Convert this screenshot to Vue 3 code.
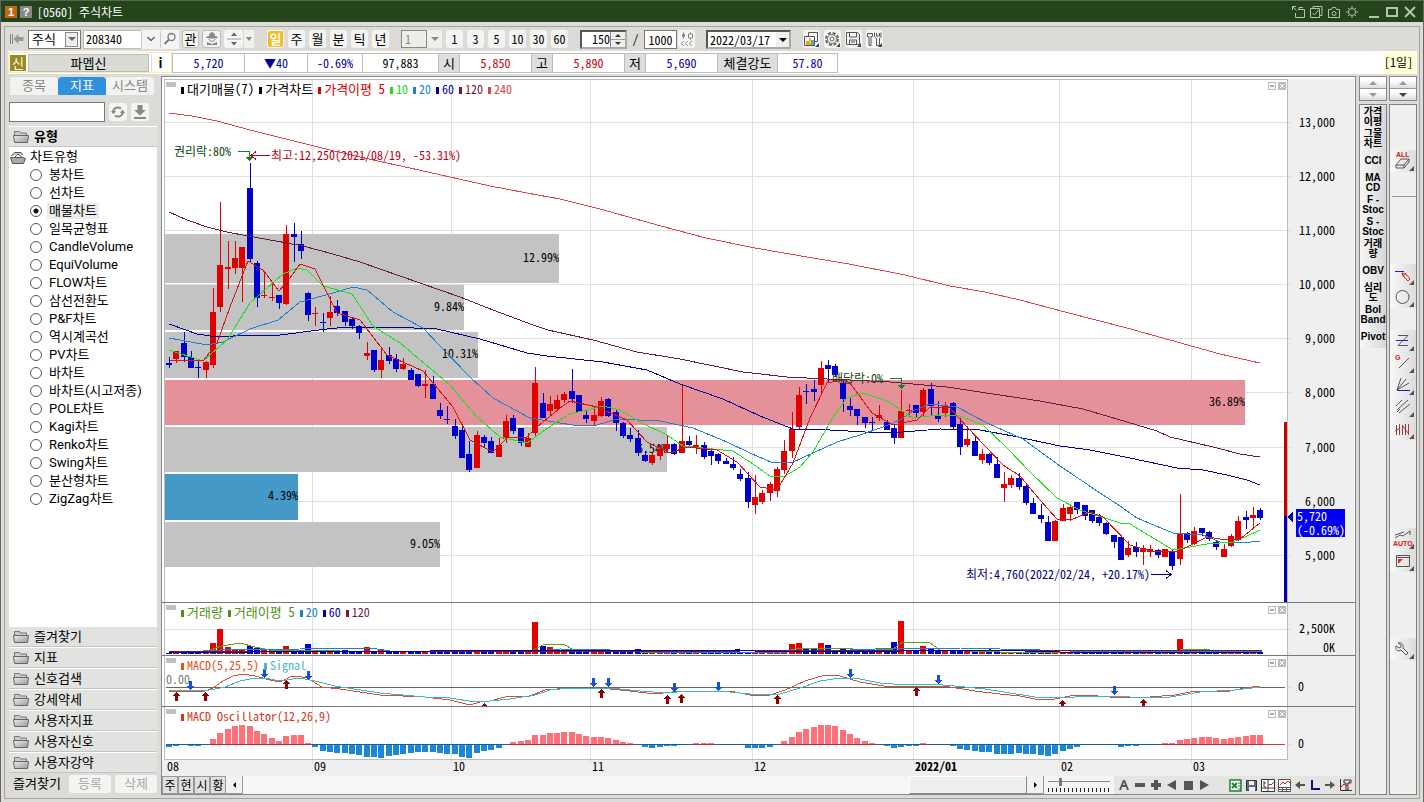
<template>
  <div class="window">
    <header class="titlebar">
      <span class="badge orange">1</span>
      <span class="badge gray">?</span>
      <h1>[0560] 주식차트</h1>
      <div class="win-tools">
        <button v-for="w in winTools" :key="w.label" :aria-label="w.label" :class="w.cls">
          <svg width="14" height="14" viewBox="0 0 14 14"><path :d="w.d" /></svg>
        </button>
      </div>
    </header>

    <div class="frame">
      <div class="toolbar">
        <button class="flat home" aria-label="처음">
          <svg width="16" height="14" viewBox="0 0 16 14"><path d="M1.5 2v10M3.5 2v10" stroke="#888" fill="none" /><path d="M4.500 7l5-5v3h5v4h-5v3z" fill="#999" /></svg>
        </button>
        <div class="combo market">
          <select v-model="market" aria-label="시장"><option>주식</option></select>
          <i class="arrow boxed"></i>
        </div>
        <div class="code">
          <input v-model="code" aria-label="종목코드" />
          <button aria-label="최근 종목"><svg width="10" height="8" viewBox="0 0 10 8"><path d="M1.500 2l3.500 3.500L8.500 2" stroke="#666" stroke-width="1.500" fill="none" /></svg></button>
          <button aria-label="종목 검색"><svg width="14" height="14" viewBox="0 0 14 14"><circle cx="8.500" cy="5" r="3.500" fill="none" stroke="#777" stroke-width="1.300" /><path d="M6 7.500L1.500 12" stroke="#777" stroke-width="1.800" /></svg></button>
        </div>
        <button class="key outlined">관</button>
        <button class="key outlined wide" aria-label="전문가">
          <svg width="14" height="16" viewBox="0 0 14 16"><path d="M4 5c0-5 6-5 6 0l3 1c1 2-13 2-12 0z" fill="#888" /><path d="M4 8c0 3 6 3 6 0" stroke="#888" fill="none" /><path d="M2 11l5 2 5-2v3H2z" fill="#888" /></svg>
        </button>
        <button class="key wide" aria-label="이전 다음">
          <svg width="16" height="16" viewBox="0 0 16 16"><path d="M5 5l3-3.500L11 5zM5 11l3 3.500 3-3.500z" fill="#666" /><path d="M1 8h14" stroke="#999" /></svg>
        </button>
        <button class="flat tiny" aria-label="더보기"><i class="tri"></i></button>

        <div class="group periods">
          <button v-for="p in periods" :key="p" class="key" :class="{ on: p === period }" @click="period = p">{{ p }}</button>
        </div>

        <div class="tick">
          <input value="1" disabled aria-label="분 단위" />
          <button class="flat" aria-label="분 선택"><i class="tri big"></i></button>
        </div>
        <div class="group minutes">
          <button v-for="m in [1, 3, 5, 10, 30, 60]" :key="m" class="key">{{ m }}</button>
        </div>

        <div class="count">
          <input v-model="count" aria-label="표시 개수" />
          <span class="spin"><button aria-label="증가"><i class="up"></i></button><button aria-label="감소"><i class="down"></i></button></span>
        </div>
        <span class="slash">/</span>
        <input v-model="total" class="total" aria-label="전체 개수" />
        <button class="key" aria-label="봉 간격">
          <svg width="16" height="16" viewBox="0 0 16 16"><path d="M4.500 1v7M11.500 1v2m0 4v2M5 10l-3 2.500L5 15M9 10l-3 2.500L9 15M13 10l-3 2.500 3 2.500" fill="none" stroke="#999" /><path d="M3 3h3v3H3z" fill="#888" /><path d="M9.500 3h4v4h-4z" fill="none" stroke="#888" /></svg>
        </button>
        <div class="combo date">
          <select v-model="date" aria-label="기준일"><option>2022/03/17</option></select>
          <i class="arrow solid"></i>
        </div>
        <div class="group icons">
          <button class="key" aria-label="차트 형태">
            <svg width="17" height="17" viewBox="0 0 17 17"><path d="M5.500 5V1.500h9v9H12M1.500 5.500h10v9h-10z" fill="none" stroke="#555" /><path d="M3 10h3v4H3z" fill="#e8a020" /><path d="M6 7h2v7H6z" fill="#e8c020" /><path d="M8 9h3v5H8z" fill="#5ac" /><path d="M16 12v4h-4z" fill="#444" /></svg>
          </button>
          <button class="key" aria-label="환경설정">
            <svg width="17" height="17" viewBox="0 0 17 17"><circle cx="8" cy="8" r="6" fill="none" stroke="#666" stroke-width="2" stroke-dasharray="3 1.700" /><circle cx="8" cy="8" r="4.500" fill="#f4f4f2" stroke="#777" /><circle cx="8" cy="8" r="2" fill="none" stroke="#666" /><path d="M16 12v4h-4z" fill="#444" /></svg>
          </button>
          <button class="key" aria-label="저장">
            <svg width="17" height="17" viewBox="0 0 17 17"><path d="M1.500 1.500h11l2 2v10h-13zM4.500 2v4h7V2M4.500 13V9h7v4M6 11h4" fill="none" stroke="#555" /><path d="M16 12v4h-4z" fill="#444" /></svg>
          </button>
          <button class="key" aria-label="도구">
            <svg width="17" height="17" viewBox="0 0 17 17"><path d="M1.500 4V2.500h5v3h-1.500v9h-2v-9h-1.500zM8.500 1.500v4l2 2v7h3v-7l1.500-2v-4M10.500 2v3h3V2" fill="none" stroke="#555" /><path d="M16 12v4h-4z" fill="#444" /></svg>
          </button>
        </div>
      </div>

      <div class="quote">
        <div class="stock">
          <span class="new">신</span>
          <button class="name">파멥신</button>
          <button class="info">i</button>
        </div>
        <table>
          <tbody>
            <tr>
              <td class="w72 blue">5,720</td>
              <td class="w63 blue">▼40</td>
              <td class="w55 blue">-0.69%</td>
              <td class="w76">97,883</td>
              <th class="w21">시</th>
              <td class="w72 red">5,850</td>
              <th class="w21">고</th>
              <td class="w72 red">5,890</td>
              <th class="w21">저</th>
              <td class="w72 blue">5,690</td>
              <th class="w60">체결강도</th>
              <td class="w60 blue">57.80</td>
            </tr>
          </tbody>
        </table>
        <span class="unit">[1일]</span>
      </div>

      <main class="body">
        <aside class="side">
          <nav class="tabs">
            <button v-for="t in tabs" :key="t" :class="{ on: t === tab }" @click="tab = t">{{ t }}</button>
          </nav>
          <div class="find">
            <input v-model="keyword" aria-label="지표 검색" />
            <button aria-label="새로고침">
              <svg width="14" height="14" viewBox="0 0 14 14"><path d="M2 7a5 5 0 0 1 8-3.500M12 7a5 5 0 0 1-8 3.500" fill="none" stroke="#888" stroke-width="2" /><path d="M0 6h5L2.500 9.500zM9 8h5l-2.500-3.500z" fill="#888" /></svg>
            </button>
            <button aria-label="내려받기">
              <svg width="14" height="14" viewBox="0 0 14 14"><path d="M4.500 0h5v5H13L7 10.500 1 5h3.500zM1 12h12v2H1z" fill="#888" /></svg>
            </button>
          </div>
          <h2 class="cat head"><svg class="folder" viewBox="0 0 16 13"><use href="#folder" /></svg>유형</h2>
          <div class="tree">
            <div class="root"><svg class="folder" viewBox="0 0 16 13"><path d="M1 5l4-3.500h6l2 2.500" fill="#ccc" stroke="#555" /><path d="M3 8L8 3l5 4z" fill="#fff" stroke="#555" /><path d="M.5 6.500h12l3 1-2 5H2.500z" fill="#aaa" stroke="#555" /></svg>차트유형</div>
            <label v-for="c in chartTypes" :key="c"><input v-model="chartType" type="radio" name="chart" :value="c" /><span>{{ c }}</span></label>
          </div>
          <button v-for="c in categories" :key="c" class="cat"><svg class="folder" viewBox="0 0 16 13"><use href="#folder" /></svg>{{ c }}</button>
          <div class="fav">
            <span>즐겨찾기</span>
            <button disabled>등록</button>
            <button disabled>삭제</button>
          </div>
        </aside>

        <section class="chart">
          <div class="pane main">
            <svg viewBox="162 77 1193 525" class="plot">
              <rect x="1287" y="79" width="67" height="523" class="axis-bg" />
              <g class="grid">
                <path v-for="g in prices" :key="g.y" :d="`M165 ${g.y - .5}H1292`" />
                <path v-for="m in months" :key="m.x" :d="`M${m.x - .5} 79V602`" />
              </g>
              <path d="M164.500 602V79.500H1287.500V602" class="edge" />
              <g v-for="b in profile" :key="b.y">
                <rect x="165" :y="b.y" :width="b.to - 165" :height="b.h" :fill="b.color" />
                <text :x="b.to" :y="b.y + b.h / 2 + 3" text-anchor="end">{{ b.text }}</text>
              </g>
              <g v-for="(c, i) in candles" :key="i" :fill="c[4] ? '#e00000' : '#0000cc'">
                <rect :x="cx(i)" :y="c[0]" width="1" :height="c[3] - c[0]" />
                <rect :x="cx(i) - 3" :y="c[1]" width="6" :height="c[2] - c[1]" />
              </g>
              <polyline v-for="m in averages" :key="m.color" :points="m.points" :stroke="m.color" class="line" />
              <g class="note green">
                <text x="174" y="156">권리락:80%</text>
                <path d="M238 151.500h11.500V160" />
                <path d="M246 157h7l-3.500 4z" class="tip" />
                <text x="832" y="383">배당락:0%</text>
                <path d="M890 378.500h11.500V388" />
                <path d="M898 385h7l-3.500 4z" class="tip" />
              </g>
              <g class="note high">
                <text x="271" y="160">최고:12,250(2021/08/19, -53.31%)</text>
                <path d="M270 155.500h-18M256 151.500l-5 4 5 4" />
              </g>
              <g class="note low">
                <text x="1150" y="579" text-anchor="end">최저:4,760(2022/02/24, +20.17%)</text>
                <path d="M1151 574.500h19M1166 570.500l5 4-5 4" />
              </g>
              <rect x="1284" y="422" width="3" height="94" fill="#c80000" />
              <rect x="1284" y="516" width="3" height="86" fill="#0000b0" />
              <text v-for="g in prices" :key="g.text" x="1335" :y="g.y + 4" text-anchor="end">{{ g.text }}</text>
              <path d="M1287 517l6-6v12z" fill="#0000a0" />
              <rect x="1296" y="509" width="49" height="28" fill="#0000f0" />
              <g class="tag"><text x="1297" y="521">5,720</text><text x="1297" y="535">(-0.69%)</text></g>
            </svg>
            <div class="legend">
              <i class="fold"></i>
              <span v-for="l in legends.price" :key="l[0]" :class="{ ko: l[2] }" :style="{ color: l[1] }">{{ l[0] }}</span>
            </div>
            <div class="pane-tools"><button class="max" aria-label="최대화"></button><button class="close" aria-label="닫기"><svg viewBox="0 0 6 6"><path d="M1 1l4 4M5 1L1 5" /></svg></button></div>
          </div>

          <div class="pane">
            <svg viewBox="162 603 1193 52" class="plot">
              <rect x="1287" y="603" width="67" height="52" class="axis-bg" />
              <g class="grid">
                <path d="M165 629.500H1292M1287 653.500H1292" />
                <path v-for="m in months" :key="m.x" :d="`M${m.x - .5} 603V655`" />
              </g>
              <path d="M164.500 603V655M1287.500 603V655" class="edge" />
              <rect v-for="(v, i) in volumes" :key="i" :x="cx(i) - 3" :y="654 - v" width="6" :height="v" :fill="candles[i][4] ? '#e80000' : '#0000cc'" />
              <polyline v-for="m in volumeAverages" :key="m.color" :points="m.points" :stroke="m.color" class="line" />
              <text x="1335" y="633" text-anchor="end">2,500K</text>
              <text x="1335" y="652" text-anchor="end">0K</text>
            </svg>
            <div class="legend">
              <i class="fold"></i>
              <span v-for="l in legends.volume" :key="l[0]" :class="{ ko: l[2] }" :style="{ color: l[1] }">{{ l[0] }}</span>
            </div>
            <div class="pane-tools"><button class="max" aria-label="최대화"></button><button class="close" aria-label="닫기"><svg viewBox="0 0 6 6"><path d="M1 1l4 4M5 1L1 5" /></svg></button></div>
          </div>

          <div class="pane">
            <svg viewBox="162 656 1193 50" class="plot">
              <rect x="1287" y="656" width="67" height="50" class="axis-bg" />
              <g class="grid">
                <path d="M1287 687.500H1292" />
                <path v-for="m in months" :key="m.x" :d="`M${m.x - .5} 656V706`" />
              </g>
              <path d="M164.500 656V706M1287.500 656V706" class="edge" />
              <path d="M166 687.500H1285" stroke="#666" />
              <text x="166" y="684" class="dim">0.00</text>
              <polyline :points="macd" stroke="#d8502c" class="line" />
              <polyline :points="signal" stroke="#3cb8c0" class="line" />
              <path v-for="a in sells" :key="a[0]" :d="`M${a[0] - 1} ${a[1]}h3v5h2l-3.500 4-3.500-4h2z`" fill="#1450e0" />
              <path v-for="a in buys" :key="a[0]" :d="`M${a[0] - 1} ${a[1] + 9}h3v-5h2l-3.500-4-3.500 4h2z`" fill="#8c0000" />
              <text x="1298" y="691">0</text>
            </svg>
            <div class="legend">
              <i class="fold"></i>
              <span v-for="l in legends.macd" :key="l[0]" :style="{ color: l[1] }">{{ l[0] }}</span>
            </div>
            <div class="pane-tools"><button class="max" aria-label="최대화"></button><button class="close" aria-label="닫기"><svg viewBox="0 0 6 6"><path d="M1 1l4 4M5 1L1 5" /></svg></button></div>
          </div>

          <div class="pane">
            <svg viewBox="162 707 1193 69" class="plot">
              <rect x="1287" y="707" width="67" height="69" class="axis-bg" />
              <rect x="162" y="760" width="1192" height="16" class="axis-bg" />
              <g class="grid">
                <path d="M1287 744.500H1292" />
                <path v-for="m in months" :key="m.x" :d="`M${m.x - .5} 707V764`" />
              </g>
              <path d="M164.500 707V759.500H1287.500V707" class="edge" />
              <rect v-for="(v, i) in oscillator" :key="i" :x="cx(i) - 3" :y="v > 0 ? 744 - v : 744" width="6" :height="Math.abs(v)" :fill="v > 0 ? '#ff7078' : '#1c86d8'" />
              <path v-for="(v, i) in oscillator" :key="'z' + i" :d="`M${cx(i) - 3} 744.500h8`" :stroke="v > 0 ? '#b83040' : '#1060a0'" />
              <path d="M1262 744.500H1285" stroke="#c84028" />
              <text x="1298" y="748">0</text>
              <text v-for="m in months" :key="m.text" :x="m.x + 1" y="771" :class="{ bold: m.year }">{{ m.text }}</text>
              <text x="167" y="771">08</text>
            </svg>
            <div class="legend">
              <i class="fold"></i>
              <span v-for="l in legends.osc" :key="l[0]" :style="{ color: l[1] }">{{ l[0] }}</span>
            </div>
            <div class="pane-tools"><button class="max" aria-label="최대화"></button><button class="close" aria-label="닫기"><svg viewBox="0 0 6 6"><path d="M1 1l4 4M5 1L1 5" /></svg></button></div>
          </div>

          <div class="bottom">
            <button v-for="b in ['주', '현', '시', '황']" :key="b" class="mini">{{ b }}</button>
            <button class="step" aria-label="왼쪽"><i class="left"></i></button>
            <div class="track"><div class="thumb"></div></div>
            <button class="step" aria-label="오른쪽"><i class="right"></i></button>
            <div class="zoom">
              <input v-model="zoom" type="range" min="0" max="100" aria-label="확대" />
              <i class="ticks"></i>
            </div>
            <div class="controls">
              <button v-for="c in controls" :key="c.label" :aria-label="c.label"><svg width="12" height="12" viewBox="0 0 12 12"><path :d="c.d" fill="#555" /></svg></button>
            </div>
            <div class="controls last">
              <button aria-label="엑셀"><svg width="13" height="13" viewBox="0 0 13 13"><path d="M1 1h11v11H1z" fill="#fff" stroke="#208030" stroke-width="1.500" /><path d="M3 4l5 5M8 4L3 9" stroke="#208030" stroke-width="2" /><path d="M9 4h3M9 7h3M9 10h3" stroke="#208030" /></svg></button>
              <button aria-label="저장"><svg width="13" height="13" viewBox="0 0 13 13"><path d="M1.500 1.500h10v10h-10z" fill="#5a6a88" stroke="#333" /><path d="M4 2h5v4H4zM4 8h6v4H4z" fill="#eee" /></svg></button>
              <button aria-label="분할"><svg width="14" height="13" viewBox="0 0 14 13"><path d="M.5.500h13v12H.5z" fill="#fff" stroke="#333" /><path d="M2 3h2v2H2m0 2h2v3M7 1v11M1 9h12" stroke="#444" fill="none" /><path d="M7 7l2-2 1 1 3-3" stroke="#c02020" fill="none" /></svg></button>
              <button aria-label="통합"><svg width="13" height="13" viewBox="0 0 13 13"><path d="M.5.500h12v12H.5z" fill="#fff" stroke="#555" /><path d="M1 8.500h11M1 10.500h11M4.500 8v4M8.500 8v4" stroke="#555" /><path d="M2 6l3-3 2 2 3-3 2 2" stroke="#c02020" fill="none" /></svg></button>
              <button aria-label="이전"><svg width="12" height="12" viewBox="0 0 12 12"><path d="M1 6l5-4v3h5v2H6v3z" fill="#555" /></svg></button>
              <button aria-label="로그"><svg width="12" height="12" viewBox="0 0 12 12"><path d="M3 1v9h8" stroke="#101080" stroke-width="2" fill="none" /></svg></button>
              <button aria-label="다음"><svg width="12" height="12" viewBox="0 0 12 12"><path d="M11 6L6 2v3H1v2h5v3z" fill="#555" /></svg></button>
              <button aria-label="도구"><svg width="14" height="14" viewBox="0 0 14 14"><path d="M1.500 1v11.500H13M5 2h7v3H9v7H7V5H5z" stroke="#333" fill="none" /><path d="M1 10l4-4 2 2 4-5" stroke="#c02020" fill="none" /></svg></button>
            </div>
          </div>
        </section>

        <aside class="rail">
          <div class="updown"><button aria-label="위로"><i class="up"></i></button><button aria-label="아래로"><i class="down"></i></button></div>
          <div class="shelf">
            <button v-for="s in shortcuts" :key="s" class="short">{{ s }}</button>
          </div>
        </aside>
        <aside class="rail">
          <div class="updown dark"><button aria-label="위로"><i class="up"></i></button><button aria-label="아래로"><i class="down"></i></button></div>
          <div class="shelf tools">
            <button v-for="t in tools" :key="t.label" class="tool" :class="t.cls" :aria-label="t.label">
              <svg width="26" height="22" viewBox="0 0 26 22">
                <path v-if="t.gray" :d="t.gray" stroke="#555" fill="none" />
                <path v-if="t.red" :d="t.red" stroke="#c83020" fill="none" />
                <path v-if="t.blue" :d="t.blue" stroke="#2020c0" fill="none" />
                <path v-if="t.fill" :d="t.fill" fill="#d83020" />
                <text v-if="t.text" :x="t.tx" :y="t.ty">{{ t.text }}</text>
                <path d="M24 16v5h-5z" fill="#555" />
              </svg>
            </button>
          </div>
        </aside>
      </main>
    </div>

    <svg width="0" height="0" class="defs">
      <defs>
        <linearGradient id="fg" x1="0" y1="0" x2="1" y2="1"><stop offset="0" stop-color="#eee" /><stop offset="1" stop-color="#999" /></linearGradient>
        <symbol id="folder" viewBox="0 0 16 13"><path d="M1.500 5V1.500h5l1 1.500h6v2" fill="#ccc" stroke="#777" /><path d="M.5 5.500h15l-1 7h-13z" fill="url(#fg)" stroke="#666" /></symbol>
      </defs>
    </svg>
  </div>
</template>

<script setup>
import { ref } from 'vue'

const market = ref('주식')
const code = ref('208340')
const period = ref('일')
const count = ref('150')
const total = ref('1000')
const date = ref('2022/03/17')
const keyword = ref('')
const tab = ref('지표')
const chartType = ref('매물차트')
const zoom = ref(18)

const periods = ['일', '주', '월', '분', '틱', '년']
const tabs = ['종목', '지표', '시스템']
const categories = ['즐겨찾기', '지표', '신호검색', '강세약세', '사용자지표', '사용자신호', '사용자강약']
const chartTypes = ['봉차트', '선차트', '매물차트', '일목균형표', 'CandleVolume', 'EquiVolume', 'FLOW차트', '삼선전환도', 'P&F차트', '역시계곡선', 'PV차트', '바차트', '바차트(시고저종)', 'POLE차트', 'Kagi차트', 'Renko차트', 'Swing차트', '분산형차트', 'ZigZag차트']
const shortcuts = ['가격\n이평', '그물\n차트', 'CCI', 'MA\nCD', 'F -\nStoc', 'S -\nStoc', '거래\n량', 'OBV', '심리\n도', 'Bol\nBand', 'Pivot']

const winTools = [
  { label: '창 분리', d: 'M1.500 5V1.500H5M1.500 1.500l4 4M7 4.500h6.500v8h-9V8M8 4V2.500h4' },
  { label: '창 복사', d: 'M4 3.500V1.500h9v9h-2M1.500 3.500h9v9h-9zM3.500 8l2 2 4-5' },
  { label: '화면 캡처', d: 'M1.500 4.500h3l1-2h3l1 2h3v8h-11zM9 8.500a2 2 0 1 1-4 0 2 2 0 0 1 4 0' },
  { label: '설정', d: 'M10.500 7a3.500 3.500 0 1 1-7 0 3.500 3.500 0 0 1 7 0M7 1v2M7 11v2M1 7h2M11 7h2M3 3l1 1M10 10l1 1M3 11l1-1M10 4l1-1' },
  { label: '최소화', d: 'M2 12h10', cls: 'bold gap' },
  { label: '최대화', d: 'M2 3h10v8H2z', cls: 'bold' },
  { label: '닫기', d: 'M2 2l10 10M12 2L2 12', cls: 'bold' }
]

const controls = [
  { label: '자동', d: 'M1 11L5 1h2l4 10H9L8 8H4l-1 3zM5 6h2L6 3z' },
  { label: '축소', d: 'M1 4h10v4H1z' },
  { label: '확대', d: 'M4 1h4v3h3v4H8v3H4V8H1V4h3z' },
  { label: '뒤로', d: 'M10 1v10L1 6z' },
  { label: '정지', d: 'M2 2h9v9H2z' },
  { label: '재생', d: 'M2 1v10l9-5z' }
]

const tools = [
  { label: '전체 지우기', cls: 'eraser', gray: 'M6 15l5-6h8l-5 6zM6 15v3h8v-3M14 18l5-6V9', text: 'ALL', tx: 6, ty: 7 },
  { label: '추세선', cls: 'first', blue: 'M5 7.500h9', red: 'M12 9l2 4 4 4 2-2-4-5zM12 9l1 3 3-2' },
  { label: '도형', gray: 'M19 11a6.500 6.500 0 1 1-13 0 6.500 6.500 0 0 1 13 0' },
  { label: '수평선', cls: 'second', gray: 'M8 5.500h10L8 15.500h10', blue: 'M6 10.500h12' },
  { label: '각도선', gray: 'M9 16L19 6', text: 'G', tx: 5, ty: 8 },
  { label: '부채꼴', gray: 'M7 16L11 4M7 16L16 5M7 16L19 9', blue: 'M7 16.500h13' },
  { label: '평행선', gray: 'M6 10l6-6M7 14L18 4M9 17L20 8M7 16l3-3' },
  { label: '주기선', red: 'M9.500 6v11M12.500 7v10M18.500 6v11M5 13l5-3M12 7l6 8', gray: 'M6.500 7v10M15.500 6v11' },
  { label: '자동 추세', cls: 'third', gray: 'M5 10l5-3 3 1 7-5v4M5 7l9-3', text: 'AUTO', tx: 3, ty: 18 },
  { label: '화면 설정', gray: 'M6.500 5.500h13v11h-13zM6 7.500h13', fill: 'M8 9h5l-5 5z' },
  { label: '도구', cls: 'fourth', gray: 'M8 5l3 2v2l-2 1-3-2c-1 4 2 6 5 4l5 5 2-2-5-5c1-4-2-6-5-5z' }
]

const legends = {
  price: [['대기매물(7)', '#000', true], ['가격차트', '#000', true], ['가격이평 5', '#d80000', true], ['10', '#20d820'], ['20', '#2080d0'], ['60', '#0000a0'], ['120', '#701840'], ['240', '#e04048']],
  volume: [['거래량', '#509010', true], ['거래이평 5', '#509010', true], ['20', '#2080d0'], ['60', '#0000a0'], ['120', '#701840']],
  macd: [['MACD(5,25,5)', '#e05020'], ['Signal', '#48b8c0']],
  osc: [['MACD Oscillator(12,26,9)', '#d03818']]
}

const prices = [
  { text: '13,000', y: 123 }, { text: '12,000', y: 177 }, { text: '11,000', y: 231 },
  { text: '10,000', y: 285 }, { text: '9,000', y: 339 }, { text: '8,000', y: 393 },
  { text: '7,000', y: 448 }, { text: '6,000', y: 502 }, { text: '5,000', y: 556 }
]

const months = [
  { text: '09', x: 313 }, { text: '10', x: 452 }, { text: '11', x: 591 }, { text: '12', x: 753 },
  { text: '2022/01', x: 914, year: true }, { text: '02', x: 1060 }, { text: '03', x: 1192 }
]

const profile = [
  { y: 234, h: 49, to: 559, text: '12.99%', color: '#c3c3c3' },
  { y: 285, h: 45, to: 464, text: '9.84%', color: '#c3c3c3' },
  { y: 332, h: 46, to: 478, text: '10.31%', color: '#c3c3c3' },
  { y: 380, h: 45, to: 1245, text: '36.89%', color: '#e5919a' },
  { y: 427, h: 45, to: 667, text: '6.54%', color: '#c3c3c3' },
  { y: 474, h: 46, to: 298, text: '4.39%', color: '#4599c6' },
  { y: 522, h: 45, to: 440, text: '9.05%', color: '#c3c3c3' }
]

const cx = i => Math.round(169 + i * 7.324)

// high, body top, body bottom, low, rising
const candles = [
  [357,363,365,368,0],[351,351,359,363,1],[332,343,357,362,0],[351,357,368,368,0],[361,367,368,378,0],
  [361,362,370,378,1],[288,312,365,368,1],[202,265,307,312,1],[241,267,269,289,1],[241,258,268,274,1],
  [247,247,268,302,1],[163,188,259,262,0],[261,263,298,307,0],[271,295,296,298,1],[282,297,298,301,1],
  [295,295,303,309,0],[225,234,304,305,1],[223,234,237,262,0],[231,244,251,259,0],[292,293,315,321,0],
  [307,313,314,326,1],[313,322,323,332,0],[296,312,318,326,1],[300,306,313,316,0],[311,311,322,326,0],
  [318,319,326,329,0],[325,326,333,339,0],[342,353,356,360,1],[350,350,370,372,0],[349,360,370,378,1],
  [347,355,361,364,0],[354,359,369,372,0],[358,364,369,370,1],[368,370,380,380,0],[374,374,386,387,0],
  [370,384,386,398,1],[376,384,399,399,0],[403,410,416,419,0],[406,419,420,424,0],[419,426,436,439,0],
  [425,430,458,458,0],[441,454,470,472,0],[431,435,468,468,1],[435,437,443,447,0],[437,441,453,453,0],
  [438,445,457,457,1],[415,421,439,443,1],[415,418,431,434,0],[428,428,443,446,0],[433,438,447,447,1],
  [367,383,433,437,1],[393,403,418,418,0],[396,404,411,415,1],[395,400,409,411,1],[392,394,400,403,1],
  [369,391,399,403,0],[395,395,412,412,0],[410,415,419,423,0],[406,415,421,425,1],[397,401,416,417,1],
  [398,399,416,417,0],[410,412,423,431,0],[422,423,436,438,0],[428,435,439,442,0],[430,438,453,456,0],
  [451,455,461,462,0],[453,455,463,465,1],[445,449,456,460,1],[436,444,449,453,1],[443,444,454,455,0],
  [384,441,453,453,1],[436,441,445,448,0],[435,445,447,454,1],[442,445,457,459,0],[448,451,456,465,0],
  [453,454,461,464,0],[458,461,464,464,0],[457,464,468,470,0],[469,474,479,481,0],[472,478,502,508,0],
  [475,497,505,514,1],[490,493,502,504,1],[482,484,493,501,1],[467,469,491,497,1],[440,451,470,474,1],
  [412,429,451,458,1],[387,395,427,430,1],[384,391,392,404,0],[380,389,392,401,0],[361,368,385,393,1],
  [360,365,369,383,0],[364,366,375,377,0],[381,383,399,412,0],[398,406,410,416,0],[409,409,416,425,0],
  [417,417,423,428,0],[417,422,423,431,0],[405,415,418,421,1],[420,422,430,430,0],[425,428,438,444,0],
  [390,411,438,438,1],[404,410,411,417,1],[405,405,413,418,0],[388,390,412,416,1],[383,389,406,415,0],
  [401,415,419,422,0],[402,406,413,417,1],[402,403,427,430,0],[418,424,447,455,0],[426,439,445,447,1],
  [436,441,456,456,0],[449,454,460,464,1],[453,454,463,465,0],[457,464,478,478,0],[472,484,488,502,1],
  [475,478,485,488,1],[473,478,487,490,0],[485,486,503,505,0],[498,503,514,514,0],[504,515,519,523,0],
  [516,522,541,541,0],[520,521,541,541,1],[504,508,521,521,1],[504,507,514,521,1],[502,502,510,514,0],
  [505,505,516,520,0],[510,510,521,523,0],[514,517,523,526,0],[522,523,534,535,0],[535,535,542,548,0],
  [537,537,560,560,0],[541,548,555,557,1],[542,547,552,557,0],[545,548,552,565,1],[545,549,552,557,1],
  [549,550,555,558,0],[549,549,557,557,1],[550,552,566,570,0],[494,533,559,565,1],[532,533,540,543,0],
  [527,531,544,545,1],[528,528,533,536,0],[531,532,539,541,0],[541,542,547,550,0],[544,549,557,557,1],
  [534,536,546,547,1],[516,521,540,541,1],[511,517,520,529,0],[507,515,518,528,1],[508,510,518,520,0]
]

const averages = [
  { color: '#e04450', points: '169,113 192,116 217,121 250,130 290,140 330,150 373,160 410,168 450,177 490,186 527,193 560,199 600,209 661,226 706,238 755,248 813,258 849,264 905,275 950,286 985,292 1020,300 1065,312 1127,328 1170,340 1220,354 1260,363' },
  { color: '#701840', points: '169,212 187,220 207,227 227,232 248,236 287,243 303,246 333,254 360,262 420,283 460,297 493,310 533,325 548,330 593,340 637,352 680,359 743,372 787,377 827,379 850,380 890,382 947,387 993,394 1040,401 1083,409 1127,422 1157,431 1170,437 1213,447 1240,454 1260,457' },
  { color: '#000098', points: '169,324 197,334 217,337 250,335 280,335 327,329 347,327 390,327 437,329 480,339 527,353 547,356 603,362 647,370 680,384 723,399 760,416 793,429 830,430 883,433 903,432 940,429 980,430 1013,436 1060,446 1090,450 1130,458 1177,468 1203,470 1227,475 1247,480 1260,485' },
  { color: '#2080d0', points: '169,338 207,345 223,342 250,329 278,320 300,302 333,293 353,287 367,290 393,312 423,328 440,346 470,377 493,398 530,418 560,423 573,425 597,425 617,419 660,421 693,428 727,442 750,453 773,463 793,462 813,453 837,442 860,435 883,427 900,420 913,411 930,404 957,407 987,423 1023,439 1060,466 1100,493 1120,506 1137,518 1173,533 1203,535 1220,542 1243,543 1260,541' },
  { color: '#20e020', points: '169,350 203,361 227,340 250,303 283,274 297,268 307,270 323,286 352,294 373,326 400,343 450,385 477,417 500,437 527,443 545,430 560,420 570,414 603,406 620,410 640,422 667,435 683,446 733,451 750,462 770,476 785,476 800,467 813,452 833,417 847,398 863,393 887,401 913,418 930,416 957,415 983,425 1007,448 1030,472 1057,498 1080,510 1120,523 1130,524 1173,550 1207,544 1233,542 1247,536 1260,530' },
  { color: '#e01010', points: '169,360 203,361 217,343 230,307 248,261 263,270 279,291 290,278 300,264 315,269 337,313 360,320 387,355 423,371 453,407 470,440 493,452 507,438 527,437 537,427 560,408 570,401 597,407 627,420 647,442 670,453 687,447 717,450 737,462 760,487 777,490 793,463 810,418 827,383 843,380 850,383 872,413 893,425 917,420 930,407 950,408 967,427 1003,465 1020,476 1040,500 1057,519 1073,519 1090,512 1103,517 1130,545 1150,551 1177,552 1207,537 1227,540 1240,539 1260,523' }
]

// the tall volume bars, everything else trades thin
const tall = {
  1: 2, 2: 3, 6: 11, 7: 25, 8: 7, 9: 5, 10: 5, 11: 8, 12: 6, 16: 8, 19: 10, 27: 7, 29: 5,
  50: 32, 51: 8, 52: 7, 53: 5, 64: 5, 84: 4, 85: 10, 86: 11, 87: 6, 88: 5, 89: 11, 90: 9, 92: 6,
  97: 6, 99: 12, 100: 33, 103: 8, 104: 6, 134: 4, 137: 4, 138: 15
}
const volumes = candles.map((c, i) => {
  if (tall[i]) return tall[i]
  if (i < 6) return 1
  if (i < 25 || (i > 90 && i < 114)) return 4
  return i < 64 ? 3 : 2
})

const volumeAverages = [
  { color: '#60a010', points: '169,653 205,652 222,646 240,643 255,647 270,650 300,650 340,651 500,652 533,650 545,644 565,645 572,649 640,652 780,652 800,648 850,648 860,651 893,649 903,642 930,643 940,650 1000,652 1170,652 1185,649 1210,650 1235,653 1262,652' },
  { color: '#2080d0', points: '169,653 220,650 300,649 370,648 390,651 540,651 560,649 610,650 680,653 790,652 850,650 900,648 960,648 1040,650 1070,651 1180,651 1262,651' },
  { color: '#701840', points: '169,652 260,651 500,651 740,651 930,650 1262,650' },
  { color: '#0000a0', points: '169,653 250,652 430,651 740,650 770,652 900,651 990,650 1060,652 1262,652' }
]

const macd = '169,691 205,691 213,688 223,681 233,676 243,674 255,676 270,680 280,682 290,677 297,676 307,678 322,687 340,689 380,695 425,697 450,700 470,705 480,702 490,701 505,697 530,696 545,690 570,688 600,688 630,691 655,694 680,691 710,691 735,692 750,695 770,695 785,690 805,681 825,675 840,676 860,682 890,687 920,686 950,687 975,691 1000,694 1020,696 1040,700 1055,699 1070,696 1085,695 1110,697 1150,697 1175,695 1195,691 1230,691 1245,688 1260,686'
const signal = '169,691 210,690 225,687 240,681 255,678 265,678 280,681 300,678 315,681 335,686 380,693 425,697 450,698 475,702 490,701 510,699 535,695 550,690 570,688 610,688 640,691 665,693 690,691 720,691 750,694 780,694 800,688 820,681 840,678 860,679 880,683 905,685 930,684 955,686 985,689 1010,693 1035,697 1055,698 1075,697 1100,696 1130,697 1170,697 1200,692 1235,690 1260,687'
const sells = [[190, 681], [264, 669], [308, 671], [593, 678], [608, 678], [674, 683], [718, 682], [850, 669], [938, 675], [1114, 686]]
const buys = [[176, 692], [205, 692], [286, 680], [484, 703], [601, 689], [667, 695], [681, 694], [777, 695], [916, 687], [1062, 700], [1143, 699]]

const oscillator = [
  -3, -2, -1, -2, -2, -1, 5, 11, 15, 18, 19, 18, 13, 10, 6, 3, 8, 9, 9, 1, -3, -7, -8, -9, -9,
  -10, -11, -13, -13, -14, -12, -11, -10, -9, -8, -8, -8, -9, -10, -10, -13, -14, -9, -7, -6, -4, 0, 2, 3, 4,
  9, 9, 11, 11, 12, 12, 10, 8, 7, 7, 6, 4, 2, 1, -1, -3, -4, -3, -2, -2, 0, 0, 1, 1, 1,
  0, 0, 0, -1, -4, -4, -4, -3, 0, 3, 7, 12, 15, 17, 19, 19, 18, 14, 10, 6, 3, 1, 0, -2, -4,
  -3, -2, -2, 1, 0, -1, 0, -2, -5, -6, -7, -8, -8, -10, -10, -10, -9, -10, -10, -11, -12, -10, -7, -5, -3,
  -1, -1, 0, -1, -1, -3, -2, -2, -1, 0, 0, 1, 1, 4, 5, 6, 7, 7, 6, 5, 6, 7, 8, 9, 9
]
</script>

<style>
body { background: #dcdbd7; }
</style>

<style scoped>
* { box-sizing: border-box; }
.window {
  min-height: 100vh;
  display: flex;
  flex-direction: column;
  background: #dcdbd7;
  border: 1px solid #666;
  border-top: 0;
  color: #000;
  font: 12px/16px "Noto Sans Mono CJK KR", "Noto Sans CJK KR", sans-serif;
}
button, input, select {
  font: inherit;
  color: inherit;
  margin: 0;
  padding: 0;
  border: 0;
  background: none;
  border-radius: 0;
  min-width: 0;
}
button {
  display: flex;
  align-items: center;
  justify-content: center;
  white-space: nowrap;
}
h1, h2 { margin: 0; font: inherit; }
.defs { position: absolute; }

.titlebar {
  height: 22px;
  display: flex;
  align-items: center;
  gap: 3px;
  padding: 0 6px 0 4px;
  background: #24441c;
  border-top: 1px solid #52694c;
  color: #fff;
}
.titlebar h1 { margin-left: 2px; }
.badge { width: 12px; height: 12px; font: bold 11px/12px "Liberation Sans", sans-serif; text-align: center; }
.badge.orange { background: #c06810; }
.badge.gray { background: #888; }
.win-tools { margin-left: auto; display: flex; gap: 4px; }
.win-tools path { fill: none; stroke: #b4c4ae; }
.win-tools .bold path { stroke-width: 2; }
.win-tools .gap { margin-left: 4px; }

.frame {
  flex: 1;
  display: flex;
  flex-direction: column;
  margin: 4px 3px 3px;
  padding: 0 2px 3px 3px;
  border: 1px solid #a4a49e;
}
.toolbar { height: 24px; display: flex; align-items: center; }
.key { height: 18px; width: 17px; background: #f4f4f2; border-radius: 3px; }
.key.outlined { border: 1px solid #bbb; margin-left: 3px; font-size: 13px; }
.key.wide { width: 19px; margin-left: 3px; }
.key.on { background: #f8b820; color: #fff; font-weight: bold; border: 1px solid #fff; }
.home { width: 17px; margin-right: 3px; }
.tiny { width: 10px; height: 18px; background: #f0f0ee; margin-left: 1px; }
.tri { border: 3px solid transparent; border-top: 4px solid #888; border-bottom: 0; }
.tri.big { border-width: 4px 4px 0; }
.combo { display: grid; align-items: center; background: #fff; border: 1px solid #777; height: 19px; }
.combo select { grid-area: 1 / 1; appearance: none; width: 100%; padding-left: 3px; outline: 0; }
.market { width: 53px; font-size: 13px; }
.date { width: 85px; margin: 0 12px 0 11px; border: 2px inset #aaa; }
.date select { padding-left: 2px; }
.arrow { grid-area: 1 / 1; justify-self: end; width: 13px; height: 15px; display: grid; place-items: center; pointer-events: none; background: #eee; }
.arrow::after { content: ""; border: 4px solid transparent; border-top-color: #666; border-bottom: 0; }
.arrow.boxed { border: 1px solid #888; margin-right: 2px; }
.arrow.solid::after { border-top-color: #000; }
.code { display: flex; height: 19px; margin-left: 2px; background: #fff; }
.code input { width: 58px; padding-left: 2px; border: 1px solid #bbb; border-right: 0; }
.code button { width: 19px; background: #f4f4f2; border-left: 1px solid #ccc; border-radius: 2px; }
.group { display: flex; gap: 4px; }
.periods { margin-left: 13px; font-size: 13px; }
.tick { display: flex; margin: 0 4px 0 12px; height: 18px; }
.tick input { width: 26px; padding-left: 3px; border: 1px solid #888; background: #ededea; color: #888; }
.tick button { width: 15px; background: #efefed; }
.count { display: flex; width: 47px; height: 19px; margin-left: 12px; border: 2px inset #aaa; background: #fff; }
.count input { width: 28px; text-align: right; }
.spin { flex: 1; display: grid; background: #eee; border-left: 1px solid #888; }
.spin button + button { border-top: 1px solid #999; }
.up { border: 3px solid transparent; border-bottom-color: #333; border-top: 0; }
.down { border: 3px solid transparent; border-top-color: #333; border-bottom: 0; }
.slash { width: 17px; text-align: center; }
.total { width: 33px; height: 19px; border: 1px solid #777; background: #fff; text-align: center; margin-right: 1px; }

.quote { height: 23px; display: flex; align-items: center; background: #fff; margin-bottom: 2px; }
.stock { display: flex; align-items: center; height: 21px; gap: 2px; padding: 0 2px 0 1px; border: 1px solid #f4f0b0; width: 164px; font-size: 13px; }
.new { width: 16px; height: 16px; line-height: 16px; text-align: center; background: #988828; color: #fffbd0; }
.name { flex: 1; height: 18px; background: #dadad6; border: 1px solid #bbb; }
.info { width: 18px; height: 18px; font-weight: bold; background: #fff; border-left: 1px solid #ddd; }
.quote table { border-collapse: collapse; table-layout: fixed; }
.quote td, .quote th { height: 19px; padding: 0; border: 1px solid #bdbdb8; text-align: center; font-weight: normal; line-height: 16px; }
.quote th { background: #dedede; font-size: 13px; }
.blue { color: #0000a0; }
.red { color: #c00010; }
.w72 { width: 72px; }
.w63 { width: 63px; }
.w55 { width: 55px; }
.w76 { width: 76px; }
.w21 { width: 21px; }
.w60 { width: 60px; }
.unit { margin-left: auto; width: 33px; height: 22px; line-height: 20px; background: #ffffd8; }

.body { flex: 1; display: flex; align-items: stretch; }
.side { width: 150px; display: flex; flex-direction: column; padding: 1px 1px 0; margin-right: 3px; font-size: 13px; font-family: Roboto, "Noto Sans CJK KR", sans-serif; }
.tabs { display: flex; height: 18px; padding-left: 1px; }
.tabs button { width: 48px; color: #888; background: #f2f2f0; border-radius: 4px 4px 0 0; }
.tabs .on { background: #3090e0; color: #fff; }
.find { display: flex; align-items: center; gap: 4px; height: 31px; padding-top: 3px; }
.find input { width: 96px; height: 20px; border: 1px solid #777; background: #fff; }
.find button { width: 18px; height: 18px; background: #f4f4f2; border-radius: 3px; }
.cat { display: flex; justify-content: flex-start; align-items: center; gap: 5px; width: 100%; height: 21px; padding-left: 4px; background: #e2e2e0; border-top: 1px solid #fff; border-bottom: 1px solid #c4c4c0; }
.head { font-weight: bold; }
.folder { width: 16px; height: 13px; }
.tree { flex: 1; background: #fff; min-height: 400px; padding-top: 1px; }
.root { display: flex; align-items: center; gap: 4px; height: 18px; padding-left: 1px; }
.tree label { display: flex; align-items: center; height: 18px; padding-left: 21px; gap: 5px; }
.tree label input { appearance: none; width: 12px; height: 12px; border: 1px solid #555; border-radius: 50%; background: #fff; }
.tree label input:checked { background: radial-gradient(circle, #111 2px, #fff 3px); }
.tree label span { padding: 0 2px; }
.tree label input:checked + span { background: #ececec; }
.fav { display: flex; align-items: flex-end; gap: 4px; height: 22px; padding: 0 0 2px 4px; }
.fav span { flex: 1; line-height: 18px; }
.fav button { width: 42px; height: 18px; color: #aaa; background: #f4f4f2; border-radius: 3px; }

.chart { flex: 1; min-width: 0; display: flex; flex-direction: column; background: #fff; border: 1px solid #808890; }
.pane { position: relative; }
.pane + .pane { border-top: 1px solid #777; }
.plot { display: block; width: 100%; height: auto; shape-rendering: crispEdges; }
.plot text { white-space: pre; }
.axis-bg { fill: #efefef; }
.grid path { stroke: #e0e0e0; }
.edge { fill: none; stroke: #bbb; }
.line { fill: none; stroke-width: 1; }
.note path { fill: none; stroke-width: 1; }
.green text { fill: #104810; }
.green path { stroke: #108020; }
.green .tip { fill: #108020; stroke: none; }
.high text { fill: #b80018; }
.high path { stroke: #b80018; }
.low text { fill: #000080; }
.low path { stroke: #000080; }
.tag text { fill: #fff; }
.dim { fill: #777; }
.bold { font-weight: bold; }
.legend { position: absolute; left: 4px; top: 2px; display: flex; align-items: center; gap: 5px; line-height: 14px; white-space: pre; }
.main .legend { top: 5px; }
.legend .fold { align-self: flex-start; width: 10px; height: 5px; background: #c0c0c0; }
.legend span::before { content: ""; display: inline-block; width: 3px; height: 7px; margin-right: 3px; background: currentColor; }
.legend .ko { font-size: 13px; }
.pane-tools { position: absolute; right: 69px; top: 3px; display: flex; gap: 2px; }
.main .pane-tools { top: 5px; }
.pane-tools button { width: 8px; height: 8px; border: 1px solid #bbb; background: #fff; }
.pane-tools .max::after { content: ""; width: 4px; height: 2px; background: #aaa; }
.pane-tools .close { background: #bbb; }
.pane-tools svg { width: 6px; height: 6px; stroke: #fff; }

.bottom { flex: 1; display: flex; min-height: 17px; background: #e4e4e2; }
.mini { width: 16px; border: 1px solid #999; background: #e0e0de; }
.step { width: 17px; background: #f2f2f0; border: 1px solid #999; border-width: 0 1px 1px 0; }
.left { border: 3px solid transparent; border-right-color: #000; border-left: 0; }
.right { border: 3px solid transparent; border-left-color: #000; border-right: 0; }
.track { flex: 1; display: flex; justify-content: flex-end; background: #f6f6f6; }
.thumb { width: 15%; background: #efefef; border: 1px solid #fff; border-right-color: #888; border-bottom-color: #888; }
.zoom { width: 70px; padding: 1px 4px; display: flex; flex-direction: column; gap: 2px; background: #f4f4f4; }
.zoom input { appearance: none; width: 100%; height: 9px; background: linear-gradient(#888, #888) center / 100% 1px no-repeat; }
.zoom input::-webkit-slider-thumb { appearance: none; width: 3px; height: 8px; background: #777; }
.ticks { height: 4px; background: repeating-linear-gradient(90deg, #222 0 1px, transparent 1px 4px); }
.controls { display: flex; align-items: center; gap: 4px; padding-left: 4px; }
.controls.last { gap: 3px; padding: 0 2px 0 19px; }

.rail { width: 28px; margin-left: 3px; display: flex; flex-direction: column; gap: 3px; }
.rail + .rail { margin-left: 2px; }
.updown { display: grid; height: 25px; border: 1px solid #888; background: #fff; }
.updown button { background: linear-gradient(#fff 30%, #ddd); }
.updown button + button { border-top: 1px solid #999; }
.updown .up { border-width: 0 4px 4px; border-bottom-color: #999; }
.updown .down { border-width: 4px 4px 0; border-top-color: #999; }
.updown.dark .down { border-top-color: #345; }
.shelf { flex: 1; padding-top: 1px; border: 1px solid #808080; background: #efefef; }
.short { width: 100%; height: 22px; white-space: pre-line; font: bold 10px/10px "Liberation Sans", "Noto Sans CJK KR", sans-serif; background: linear-gradient(90deg, #f6f6f6, #d8d8da); }
.tool { width: 100%; height: 22px; background: linear-gradient(90deg, #f8f8f8, #dcdcdc); }
.tool text { font: bold 7px "Liberation Sans", sans-serif; fill: #d02010; }
.eraser { margin-top: 44px; }
.first { margin-top: 92px; position: relative; }
.first::before { content: ""; position: absolute; left: 2px; right: 0; top: -68px; border-top: 1px solid #999; }
.second { margin-top: 22px; }
.third { margin-top: 88px; }
.fourth { margin-top: 66px; }
</style>
